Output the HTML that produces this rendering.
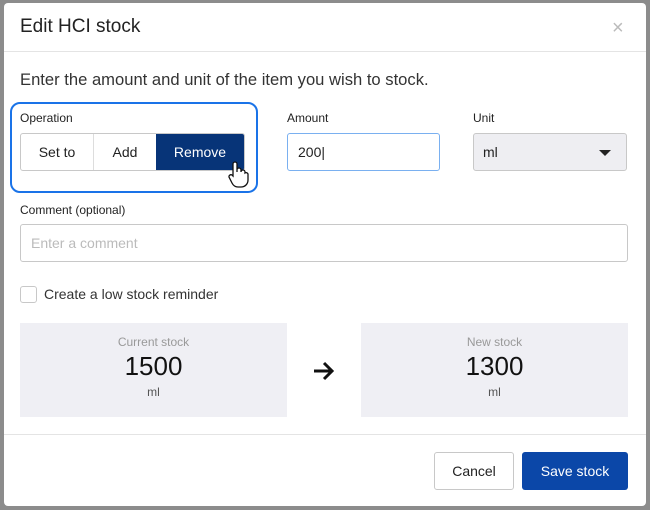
<!DOCTYPE html><html><head><style>
*{box-sizing:border-box;margin:0;padding:0}
body{width:650px;height:510px;background:#8c8c8c;font-family:"Liberation Sans",sans-serif;position:relative;overflow:hidden;color:#222}
.d{position:absolute;left:4px;top:3px;width:642px;height:503px;background:#fff;border-radius:4px}
.a{position:absolute}
.lbl{font-size:12px;color:#222}
.box{border:1px solid #c8c8c8;border-radius:3px}
</style></head><body>
<div class="d"></div>
<div class="a" style="left:20px;top:16px;font-size:19px;color:#222">Edit HCI stock</div>
<div class="a" style="left:612px;top:17px;font-size:20px;color:#bbb">×</div>
<div class="a" style="left:4px;top:51px;width:642px;height:1px;background:#e4e4e4"></div>
<div class="a" style="left:20px;top:70px;font-size:16.6px;color:#333">Enter the amount and unit of the item you wish to stock.</div>
<div class="a" style="left:10px;top:102px;width:248px;height:91px;border:2px solid #1a73e8;border-radius:10px"></div>
<div class="a lbl" style="left:20px;top:111px">Operation</div>
<div class="a box" style="left:20px;top:133px;width:225px;height:38px;display:flex;font-size:14px;overflow:hidden">
<div style="width:73px;border-right:1px solid #ddd;text-align:center;line-height:36px">Set to</div>
<div style="width:62px;text-align:center;line-height:36px">Add</div>
<div style="flex:1;background:#073478;color:#fff;text-align:center;line-height:36px">Remove</div></div>
<svg class="a" style="left:227px;top:160px" width="22" height="28" viewBox="0 0 22 28"><path d="M6 16V4a2 2 0 0 1 4 0v8v-2a2 2 0 0 1 4 0v2a2 2 0 0 1 4 0v1a2 2 0 0 1 3 1v6c0 4-3 7-7 7h-3c-3 0-5-2-6-4l-3-6a2 2 0 0 1 3-2z" fill="#fff" stroke="#111" stroke-width="1.3"/></svg>
<div class="a lbl" style="left:287px;top:111px">Amount</div>
<div class="a" style="left:287px;top:133px;width:153px;height:38px;border:1px solid #7ab0f0;border-radius:3px;font-size:14px;padding:0 10px;line-height:36px">200|</div>
<div class="a lbl" style="left:473px;top:111px">Unit</div>
<div class="a box" style="left:473px;top:133px;width:154px;height:38px;background:#eeeef2;font-size:14px;padding:0 9px;line-height:36px">ml<span style="position:absolute;right:15px;top:16px;border:6px solid transparent;border-top:6px solid #222;border-bottom:0"></span></div>
<div class="a lbl" style="left:20px;top:203px">Comment (optional)</div>
<div class="a box" style="left:20px;top:224px;width:608px;height:38px;font-size:14px;color:#bbb;padding:0 10px;line-height:36px">Enter a comment</div>
<div class="a box" style="left:20px;top:286px;width:17px;height:17px"></div>
<div class="a" style="left:44px;top:286px;font-size:14px;color:#333">Create a low stock reminder</div>
<div class="a" style="left:20px;top:323px;width:267px;height:94px;background:#efeff4;text-align:center">
<div style="font-size:12px;color:#999;margin-top:12px">Current stock</div>
<div style="font-size:26px;color:#111;margin-top:2px">1500</div>
<div style="font-size:12px;color:#555;margin-top:3px">ml</div></div>
<svg class="a" style="left:312px;top:360px" width="24" height="22" viewBox="0 0 24 22"><path d="M2 11H20M12 3l8 8-8 8" fill="none" stroke="#111" stroke-width="3"/></svg>
<div class="a" style="left:361px;top:323px;width:267px;height:94px;background:#efeff4;text-align:center">
<div style="font-size:12px;color:#999;margin-top:12px">New stock</div>
<div style="font-size:26px;color:#111;margin-top:2px">1300</div>
<div style="font-size:12px;color:#555;margin-top:3px">ml</div></div>
<div class="a" style="left:4px;top:434px;width:642px;height:1px;background:#e4e4e4"></div>
<div class="a box" style="left:434px;top:452px;width:80px;height:38px;font-size:14px;text-align:center;line-height:36px">Cancel</div>
<div class="a" style="left:522px;top:452px;width:106px;height:38px;background:#0b47a8;border-radius:3px;color:#fff;font-size:14px;text-align:center;line-height:38px">Save stock</div>
</body></html>
